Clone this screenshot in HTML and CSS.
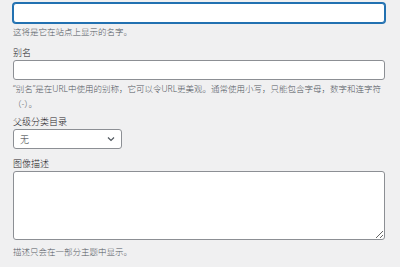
FILE: index.html
```html
<!DOCTYPE html>
<html lang="zh-CN">
<head>
    <meta charset="UTF-8">
    <meta name="viewport" content="width=device-width, initial-scale=1.0">
    <title>编辑分类</title>
    <link rel="stylesheet" href="styles.css">
</head>
<body>
    <div class="form-wrap">
        <div class="form-field term-name">
            <label for="tag-name">名称</label>
            <input id="tag-name" class="text-input focused" type="text">
            <p class="description">这将是它在站点上显示的名字。</p>
        </div>
        <div class="form-field term-slug">
            <label for="tag-slug">别名</label>
            <input id="tag-slug" class="text-input" type="text">
            <p class="description">“别名”是在URL中使用的别称，它可以令URL更美观。通常使用小写，只能包含字母，数字和连字符<span class="cjk">（-）。</span></p>
        </div>
        <div class="form-field term-parent">
            <label for="parent">父级分类目录</label>
            <div class="select-wrap">
                <select id="parent" class="postform">
                    <option>无</option>
                </select>
                <svg class="chevron" width="10" height="10" viewBox="0 0 10 10">
                    <path d="M2 3.5 L5 6.5 L8 3.5" fill="none" stroke="#50575e" stroke-width="1.2"/>
                </svg>
            </div>
        </div>
        <div class="form-field term-description">
            <label for="tag-description">图像描述</label>
            <textarea id="tag-description" class="text-area"></textarea>
            <p class="description">描述只会在一部分主题中显示。</p>
        </div>
    </div>
</body>
</html>
```

FILE: styles.css
```css
body {
    margin: 0;
    padding: 0;
    background-color: #f0f0f1;
    color: #1d2327;
    font-family: "Noto Sans", "Noto Sans CJK SC", sans-serif;
    overflow: hidden;
}
.form-wrap {
    width: 372px;
    margin-left: 13px;
    margin-top: -12px;
}
.form-field {
    margin-bottom: 5px;
}
.term-name {
    margin-bottom: 6px;
}
.term-slug {
    margin-bottom: 3px;
}
.term-parent {
    margin-bottom: 7px;
}
.form-field label {
    display: block;
    height: 15px;
    font-size: 9px;
    font-weight: 300;
    line-height: 15px;
}
.text-input {
    display: block;
    box-sizing: border-box;
    width: 100%;
    height: 20px;
    margin: 0;
    padding: 0 6px;
    border: 1px solid #8c8f94;
    border-radius: 3px;
    background-color: #ffffff;
    outline: none;
}
.text-input.focused {
    border-color: #2271b1;
    box-shadow: 0 0 0 1px #2271b1;
}
.description {
    margin: 1px 0 0;
    font-size: 8.5px;
    font-weight: 300;
    line-height: 15px;
    color: #50575e;
}
.description .cjk {
    font-family: "Noto Sans CJK SC", sans-serif;
}
.term-description .description {
    margin-top: 4px;
}
.select-wrap {
    position: relative;
    width: 109px;
    height: 20px;
}
.postform {
    display: block;
    box-sizing: border-box;
    width: 100%;
    height: 20px;
    margin: 0;
    padding: 0 0 0 6px;
    border: 1px solid #8c8f94;
    border-radius: 3px;
    background-color: #ffffff;
    color: #2c3338;
    font-family: "Noto Sans", "Noto Sans CJK SC", sans-serif;
    font-size: 9px;
    font-weight: 300;
    -webkit-appearance: none;
    appearance: none;
    outline: none;
}
.chevron {
    position: absolute;
    right: 6px;
    top: 5px;
}
.text-area {
    display: block;
    box-sizing: border-box;
    width: 100%;
    height: 69px;
    margin: 0;
    border: 1px solid #8c8f94;
    border-radius: 3px;
    background-color: #ffffff;
    outline: none;
}
```
